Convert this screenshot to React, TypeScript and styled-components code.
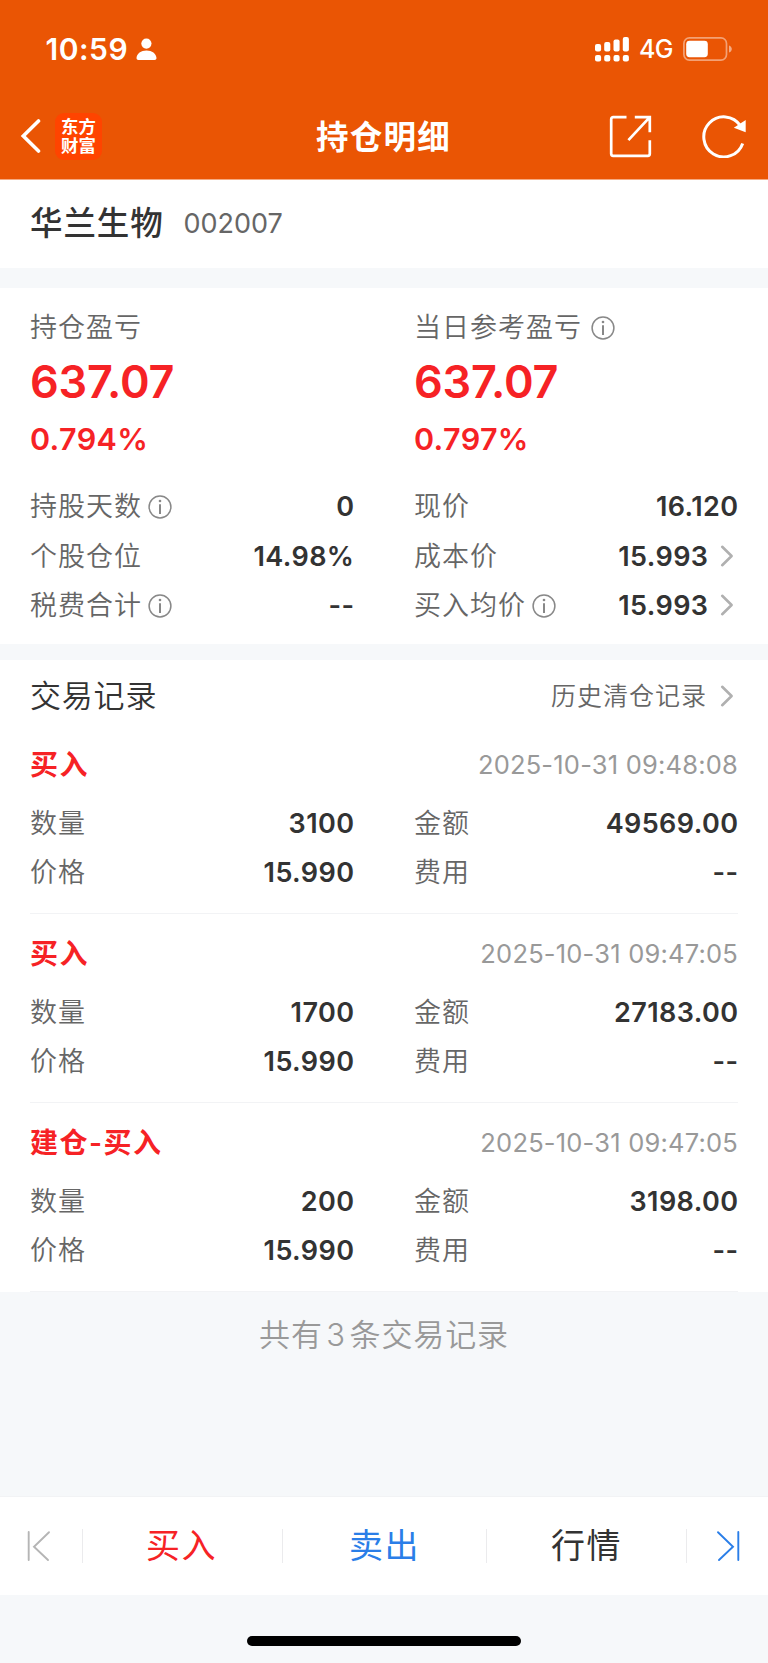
import React from 'react';
import styled, { createGlobalStyle } from 'styled-components';

const RED = '#f62225';
const BLUE = '#2a7ee8';
const LINE = '#f2f3f5';

const GlobalStyle = createGlobalStyle`
  * { box-sizing: border-box; }
  body {
    margin: 0;
    background: #f6f8fa;
    font-family: Inter, 'Noto Sans CJK SC', sans-serif;
    color: #333;
  }
  svg { display: block; flex: none; }
`;

const Screen = styled.div`
  width: 768px;
  height: 1663px;
  display: flex;
  flex-direction: column;
  overflow: hidden;
  white-space: nowrap;
`;

const Header = styled.header`
  height: 180px;
  background: #ea5504;
  border-bottom: 1px solid #f5aa82;
  color: #fff;
`;

const StatusBar = styled.div`
  height: 96px;
  padding: 2px 35px 0 45.5px;
  display: flex;
  align-items: center;
`;

const Clock = styled.span`
  width: 90.5px;
  font-size: 30px;
  font-weight: 600;
  letter-spacing: 0.5px;
`;

const StatusRight = styled.div`
  margin-left: auto;
  display: flex;
  align-items: center;
`;

const Network = styled.span`
  width: 44px;
  margin-left: 10px;
  font-size: 25px;
  font-weight: 500;
  letter-spacing: -0.6px;
  line-height: 30px;
`;

const NavBar = styled.div`
  height: 80px;
  padding: 0 22px 0 20px;
  display: grid;
  grid-template-columns: 1fr auto 1fr;
  align-items: center;
`;

const NavLeft = styled.div`
  display: flex;
  align-items: center;
  gap: 14px;
`;

const NavRight = styled.div`
  display: flex;
  align-items: center;
  justify-content: flex-end;
  gap: 50px;
`;

const Logo = styled.div`
  width: 47px;
  height: 47px;
  padding-top: 3px;
  border-radius: 9px;
  background: #ff4400;
  font: 700 17.4px/19.6px 'Noto Sans CJK SC', sans-serif;
  text-align: center;
`;

const Title = styled.h1`
  margin: 0;
  padding: 3px 0 0 1px;
  font-size: 32.5px;
  font-weight: 600;
  letter-spacing: 1.2px;
  line-height: 40px;
`;

const StockBar = styled.section`
  height: 88px;
  padding: 0 30px 1px;
  display: flex;
  align-items: center;
  background: #fff;
`;

const StockName = styled.span`
  width: 153.5px;
  font-size: 32.5px;
  font-weight: 500;
  letter-spacing: 0.9px;
  line-height: 40px;
`;

const StockCode = styled.span`
  color: #666;
  font-size: 27px;
  line-height: 40px;
`;

const Summary = styled.section`
  height: 356px;
  margin-top: 20px;
  padding: 18px 30px 0;
  background: #fff;
`;

const Columns = styled.div`
  display: grid;
  grid-template-columns: 1fr 1fr;
  column-gap: 60px;
`;

const Label = styled.div<{ $gap?: number }>`
  height: 42px;
  padding-top: 1px;
  display: flex;
  align-items: center;
  gap: ${(p) => p.$gap ?? 6}px;
  color: #666;
  font-size: 27px;
  font-weight: 350;
  letter-spacing: 1px;
  line-height: 42px;
`;

const Profit = styled.div`
  height: 68px;
  color: ${RED};
  font-size: 45px;
  font-weight: 600;
  letter-spacing: -0.2px;
  line-height: 68px;
`;

const Percent = styled.div`
  height: 46px;
  margin-bottom: 20.3px;
  color: ${RED};
  font-size: 30.5px;
  font-weight: 600;
  letter-spacing: 0.35px;
  line-height: 46px;
`;

const Row = styled.div`
  height: 49.2px;
  display: flex;
  align-items: center;
  justify-content: space-between;
`;

const Value = styled.div`
  margin-right: -0.4px;
  display: flex;
  align-items: center;
  gap: 12px;
  color: #333;
  font-size: 27px;
  font-weight: 600;
  letter-spacing: 0.4px;
`;

const Records = styled.section`
  height: 632px;
  margin-top: 16px;
  background: #fff;
`;

const RecordsHead = styled.div`
  height: 65px;
  padding: 6px 30px 0;
  display: flex;
  align-items: center;
  justify-content: space-between;
  font-size: 31px;
  font-weight: 350;
  letter-spacing: 0.8px;
  line-height: 40px;
`;

const HistoryLink = styled.a`
  display: flex;
  align-items: center;
  gap: 13px;
  color: #666;
  font-size: 25px;
  letter-spacing: 1px;
`;

const Record = styled.article`
  height: 189px;
  margin: 0 30px;
  padding-top: 5px;
  border-bottom: 1px solid ${LINE};
`;

const RecordTop = styled.div`
  height: 69px;
  display: flex;
  align-items: center;
  justify-content: space-between;
`;

const Side = styled.span`
  padding-bottom: 4px;
  color: ${RED};
  font-size: 28px;
  font-weight: 600;
  letter-spacing: 1.5px;
`;

const Time = styled.time`
  color: #999;
  font-size: 25.5px;
  letter-spacing: 0.2px;
`;

const Count = styled.p`
  margin: 0;
  padding-top: 22px;
  height: 204px;
  color: #999;
  font-size: 31px;
  font-weight: 350;
  letter-spacing: 0.9px;
  line-height: 42px;
  text-align: center;
`;

const CountNumber = styled.span`
  margin: 0 3.5px;
`;

const ActionBar = styled.nav`
  height: 99px;
  padding-bottom: 1px;
  display: grid;
  grid-template-columns: 83px 200px 204px 200px 81px;
  align-items: center;
  background: #fff;
  border-top: 1px solid ${LINE};
`;

const Action = styled.div<{ $color?: string }>`
  height: 34px;
  padding-top: 1px;
  display: flex;
  align-items: center;
  justify-content: center;
  color: ${(p) => p.$color ?? '#333'};
  font-size: 34px;
  letter-spacing: 1.4px;
  line-height: 34px;
  border-right: 1px solid #ebebed;
  &:first-child { padding: 0 5px 0 0; }
  &:nth-child(2) { padding-right: 2px; }
  &:last-child { border-right: 0; padding: 0; }
`;

const HomeIndicator = styled.div`
  width: 274px;
  height: 10px;
  margin: 41px auto 0;
  border-radius: 5px;
  background: #000;
`;

const InfoIcon = () => (
  <svg width="24" height="24" viewBox="0 0 24 24" fill="none" stroke="#888" strokeWidth="1.5">
    <circle cx="12" cy="12" r="10.9" />
    <path d="M12 9.3v9.7" strokeWidth="2" />
    <circle cx="12" cy="6" r="1.3" fill="#888" stroke="none" />
  </svg>
);

const Chevron = () => (
  <svg width="18" height="24" viewBox="0 0 18 24" fill="none" stroke="#b0b0b0" strokeWidth="2.6" strokeLinecap="round" strokeLinejoin="round">
    <path d="M2.2 2.8 11.6 12 2.2 21.2" />
  </svg>
);

const PersonIcon = () => (
  <svg width="21" height="23" viewBox="0 0 21 23" fill="#fff">
    <circle cx="10.4" cy="5.6" r="5.1" />
    <path d="M.5 20.1C.8 15.4 5 12.4 10.5 12.4s9.7 3 10 7.7c0 1.2-.7 1.9-1.9 1.9H2.4C1.2 22 .5 21.3.5 20.1Z" />
  </svg>
);

const bars = [
  { x: 0, y: 7, h: 7.5 },
  { x: 9.2, y: 5, h: 9.5 },
  { x: 18.5, y: 2.6, h: 11.9 },
  { x: 27.8, y: 0, h: 14.5 },
];

const SignalIcon = () => (
  <svg width="34" height="25" viewBox="0 0 34 25" fill="#fff">
    {bars.map((b) => (
      <g key={b.x}>
        <rect x={b.x} y={b.y} width="6.1" height={b.h} rx="2" />
        <rect x={b.x} y="18" width="6.1" height="6.5" rx="2" />
      </g>
    ))}
  </svg>
);

const BatteryIcon = () => (
  <svg width="50" height="26" viewBox="0 0 50 26" fill="none">
    <rect x=".9" y="1.9" width="42.6" height="22.2" rx="5.5" stroke="#fff" strokeOpacity=".45" strokeWidth="1.7" />
    <rect x="3.2" y="4.8" width="21.6" height="16.4" rx="3.4" fill="#fff" />
    <path d="M46 9.5c1.8.5 2.8 2 2.8 3.5s-1 3-2.8 3.5Z" fill="#fff" fillOpacity=".5" />
  </svg>
);

const BackIcon = () => (
  <svg width="21" height="36" viewBox="0 0 21 36" fill="none" stroke="#fff" strokeWidth="3.6" strokeLinecap="round" strokeLinejoin="miter">
    <path d="M18.5 3 3.3 18l15.2 15" />
  </svg>
);

const ShareIcon = () => (
  <svg width="43" height="43" viewBox="0 0 43 43" fill="none" stroke="#fff" strokeWidth="2.7">
    <path d="M17.5 2.2H4.2a2 2 0 0 0-2 2v34.6a2 2 0 0 0 2 2h34.6a2 2 0 0 0 2-2V25.2" />
    <path d="M25.8 2.2h15v15M40.8 2.2 19.4 25.2" />
  </svg>
);

const RefreshIcon = () => (
  <svg width="44" height="44" viewBox="0 0 44 44" fill="none">
    <path d="M40.7 29.4A20 20 0 1 1 38.4 11.7" stroke="#fff" strokeWidth="3" />
    <path d="M43.7 6v12.2L31.8 13.8Z" fill="#fff" />
  </svg>
);

const EdgeIcon = ({ color, flip }: { color: string; flip?: boolean }) => (
  <svg width="24" height="32" viewBox="0 0 24 32" fill="none" stroke={color} strokeWidth="1.9" strokeLinecap="round">
    <path d={flip ? 'M22.3 2v28M2 2.2 17 16.8 3 30' : 'M1.7 2v28M22 2.2 7 16.8 21 30'} />
  </svg>
);

type Item = { label: string; value: string; info?: boolean; more?: boolean };

const holdings: Item[] = [
  { label: '持股天数', value: '0', info: true },
  { label: '现价', value: '16.120' },
  { label: '个股仓位', value: '14.98%' },
  { label: '成本价', value: '15.993', more: true },
  { label: '税费合计', value: '--', info: true },
  { label: '买入均价', value: '15.993', info: true, more: true },
];

const records = [
  { side: '买入', time: '2025-10-31 09:48:08', qty: '3100', amount: '49569.00' },
  { side: '买入', time: '2025-10-31 09:47:05', qty: '1700', amount: '27183.00' },
  { side: '建仓-买入', time: '2025-10-31 09:47:05', qty: '200', amount: '3198.00' },
];

const ItemRow = ({ label, value, info, more }: Item) => (
  <Row>
    <Label>
      {label}
      {info && <InfoIcon />}
    </Label>
    <Value>
      {value}
      {more && <Chevron />}
    </Value>
  </Row>
);

export default function App() {
  return (
    <>
      <GlobalStyle />
      <Screen>
        <Header>
          <StatusBar>
            <Clock>10:59</Clock>
            <PersonIcon />
            <StatusRight>
              <SignalIcon />
              <Network>4G</Network>
              <BatteryIcon />
            </StatusRight>
          </StatusBar>
          <NavBar>
            <NavLeft>
              <BackIcon />
              <Logo>东方<br />财富</Logo>
            </NavLeft>
            <Title>持仓明细</Title>
            <NavRight>
              <ShareIcon />
              <RefreshIcon />
            </NavRight>
          </NavBar>
        </Header>

        <StockBar>
          <StockName>华兰生物</StockName>
          <StockCode>002007</StockCode>
        </StockBar>

        <Summary>
          <Columns>
            <div>
              <Label>持仓盈亏</Label>
              <Profit>637.07</Profit>
              <Percent>0.794%</Percent>
            </div>
            <div>
              <Label $gap={9}>当日参考盈亏<InfoIcon /></Label>
              <Profit>637.07</Profit>
              <Percent>0.797%</Percent>
            </div>
            {holdings.map((item) => (
              <ItemRow key={item.label} {...item} />
            ))}
          </Columns>
        </Summary>

        <Records>
          <RecordsHead>
            交易记录
            <HistoryLink>历史清仓记录<Chevron /></HistoryLink>
          </RecordsHead>
          {records.map((r) => (
            <Record key={r.amount}>
              <RecordTop>
                <Side>{r.side}</Side>
                <Time>{r.time}</Time>
              </RecordTop>
              <Columns>
                <ItemRow label="数量" value={r.qty} />
                <ItemRow label="金额" value={r.amount} />
                <ItemRow label="价格" value="15.990" />
                <ItemRow label="费用" value="--" />
              </Columns>
            </Record>
          ))}
        </Records>

        <Count>共有<CountNumber>3</CountNumber>条交易记录</Count>

        <ActionBar>
          <Action><EdgeIcon color="#b5b5b5" /></Action>
          <Action $color={RED}>买入</Action>
          <Action $color={BLUE}>卖出</Action>
          <Action>行情</Action>
          <Action><EdgeIcon color={BLUE} flip /></Action>
        </ActionBar>
        <HomeIndicator />
      </Screen>
    </>
  );
}
